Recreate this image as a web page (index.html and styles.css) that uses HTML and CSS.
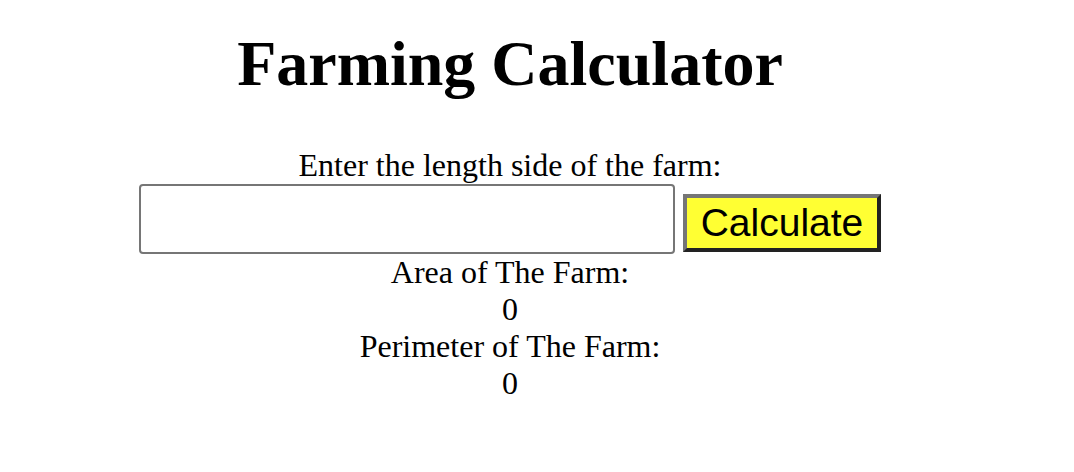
FILE: index.html
```html
<!DOCTYPE html>
<html>
<head>
<meta charset="utf-8">
<title>Farming Calculator</title>
<link rel="stylesheet" href="styles.css">
</head>
<body>
<div class="page">
  <h1 class="title">Farming Calculator</h1>
  <div class="line">Enter the length side of the farm:</div>
  <div class="row"><input class="field" type="text"><button class="calc">Calculate</button></div>
  <div class="line">Area of The Farm:</div>
  <div class="line">0</div>
  <div class="line">Perimeter of The Farm:</div>
  <div class="line">0</div>
</div>
</body>
</html>
```
FILE: styles.css
```css
html, body {
  margin: 0;
  padding: 0;
  background: #ffffff;
}
.page {
  width: 1020px;
  text-align: center;
  font-family: "Liberation Serif", "Times New Roman", serif;
  font-size: 32px;
  color: #000;
  padding-top: 27px;
}
.title {
  font-size: 64px;
  font-weight: bold;
  margin: 0 0 47px 0;
  line-height: 73px;
}
.line {
  line-height: 37px;
}
.row {
  display: flex;
  justify-content: center;
  align-items: flex-end;
  gap: 8px;
  height: 70px;
}
.field {
  box-sizing: border-box;
  width: 536px;
  height: 70px;
  border: 2px solid #767676;
  border-radius: 4px;
  padding: 0 4px;
  margin: 0;
  font-size: 32px;
  background: #fff;
}
.calc {
  box-sizing: border-box;
  width: 198px;
  height: 58px;
  margin: 0 0 2px 0;
  padding: 0;
  font-family: "Liberation Sans", Arial, sans-serif;
  font-size: 39px;
  line-height: 50px;
  color: #000;
  background: #ffff33;
  border-style: solid;
  border-width: 4px;
  border-color: #767676 #222222 #222222 #767676;
}
```
